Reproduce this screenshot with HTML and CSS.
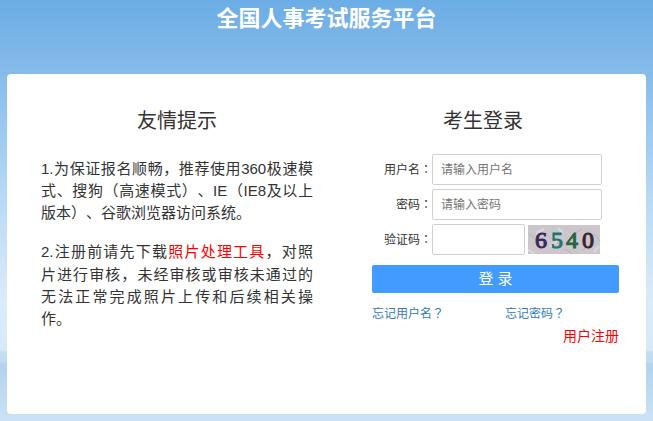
FILE: index.html
```html
<!DOCTYPE html>
<html lang="zh-CN">
<head>
    <meta charset="UTF-8">
    <meta name="viewport" content="width=device-width, initial-scale=1.0">
    <title>全国人事考试服务平台</title>
    <link rel="stylesheet" href="styles.css">
</head>
<body>
    <h1>全国人事考试服务平台</h1>

    <main class="panel">
        <section class="tips">
            <h2>友情提示</h2>
            <p>
                <span class="line">1.为保证报名顺畅<span class="mark">，</span>推荐使用360极速模</span>
                <span class="line">式、搜狗（高速模式）、IE（IE8及以上</span>
                版本）、谷歌浏览器访问系统。
            </p>
            <p>
                <span class="line">2.注册前请先下载<a href="#" class="red">照片处理工具</a><span class="mark">，</span>对照</span>
                <span class="line">片进行审核<span class="mark">，</span>未经审核或审核未通过的</span>
                <span class="line">无法正常完成照片上传和后续相关操</span>
                作。
            </p>
        </section>

        <section class="login">
            <h2>考生登录</h2>
            <form>
                <div class="form-row">
                    <label for="username">用户名<span class="mark" lang="zh-TW">：</span></label>
                    <input type="text" id="username" name="username" placeholder="请输入用户名">
                </div>
                <div class="form-row">
                    <label for="password">密码<span class="mark" lang="zh-TW">：</span></label>
                    <input type="password" id="password" name="password" placeholder="请输入密码">
                </div>
                <div class="form-row">
                    <label for="captcha">验证码<span class="mark" lang="zh-TW">：</span></label>
                    <input type="text" id="captcha" name="captcha" class="short">
                    <svg class="captcha" viewBox="0 0 72 29" width="72" height="29">
                        <rect width="72" height="29" fill="#cdc6cc"/>
                        <g fill="none" stroke-width="2" opacity="0.6">
                            <path stroke="#b3cfc3" d="M0 4l9-4M1 12l16-9M12 10l15-9M24 5l9 3M38 2l8 6M57 4l13 7M3 21l7-6M23 27l8-7M44 24l5 4M61 23l9-8"/>
                            <path stroke="#d9bfce" d="M6 6l8 5M17 3l10 7M31 10l9-7M49 2l8 6M63 3l7 7M2 17l8 8M14 22l9 6M28 17l6 9M47 16l7 9M59 17l9 9"/>
                            <path stroke="#b5a3b4" stroke-width="1" d="M0 8l6 5M11 25l8-8M23 13l8 6M36 24l8 4M46 9l8-5M55 25l9-7M66 9l6 7M18 8l4 5"/>
                            <path stroke="#e6e6e6" d="M0 25l6 3M8 8l8-4M22 22l7-6M30 3l5 5M42 21l7-5M54 13l4-4M66 27l5-6"/>
                        </g>
                        <text x="7" y="23" fill="#372858" stroke="#372858">6</text>
                        <text x="23" y="23" fill="#26736c" stroke="#26736c">5</text>
                        <text x="38" y="23" fill="#28663d" stroke="#28663d">4</text>
                        <text x="54" y="23" fill="#3a242d" stroke="#3a242d">0</text>
                    </svg>
                </div>
                <button type="submit">登 录</button>
                <div class="links">
                    <a href="#">忘记用户名<span class="mark" lang="zh-TW">？</span></a>
                    <a href="#">忘记密码<span class="mark" lang="zh-TW">？</span></a>
                </div>
                <a href="#" class="register red">用户注册</a>
            </form>
        </section>
    </main>
</body>
</html>
```

FILE: styles.css
```css
* {
    box-sizing: border-box;
}
body {
    margin: 0;
    padding: 0 7px 7px;
    min-height: 100vh;
    display: flex;
    flex-direction: column;
    font-family: "Liberation Sans", "Noto Sans CJK SC", sans-serif;
    font-size: 15px;
    line-height: 22px;
    text-spacing-trim: space-all;
    color: #333;
    /* sky on top, two soft waves near the bottom */
    background: linear-gradient(#6bade5 0, #89bdea 80px, #b8daf5 200px, #daebfa 300px, #d8eafa 350px, #c3def3 352px, #c0dcf2 362px, #b1d3ee 364px, #cbe2f6 100%);
}
h1 {
    margin: 0 0 36px;
    font-size: 22px;
    line-height: 38px;
    text-align: center;
    color: #fff;
}
h2 {
    margin: 0 0 20px;
    font-size: 20px;
    font-weight: normal;
    line-height: 26px;
    text-align: center;
}
a {
    color: #337ab7;
    text-decoration: none;
}
.red {
    color: #f00;
}
/* centred full-width punctuation */
.mark {
    font-family: "Noto Sans CJK TC", sans-serif;
}
.panel {
    flex: 1;
    display: grid;
    grid-template-columns: 1fr 1fr;
    gap: 34px;
    padding: 34px 27px 34px 34px;
    background-color: #fff;
    border-radius: 4px;
}
.tips h2 {
    margin-bottom: 23px;
}
.tips p {
    margin: 0 0 16px;
}
.line {
    display: block;
    text-align-last: justify;
    white-space: nowrap;
}
.login form {
    margin-left: 25px;
}
.form-row {
    display: flex;
    align-items: center;
    margin-bottom: 4px;
}
.form-row label {
    width: 60px;
    font-size: 12px;
    text-align: right;
}
.form-row input {
    width: 170px;
    height: 31px;
    padding: 0 8px;
    border: 1px solid #d0d0d0;
    border-radius: 2px;
    font-family: inherit;
    font-size: 12px;
    color: #555;
}
.form-row input::placeholder {
    color: #757575;
}
.form-row input.short {
    width: 93px;
}
.captcha {
    margin-left: 3px;
    font-family: "Liberation Serif", serif;
    font-size: 24px;
}
button {
    display: block;
    width: 100%;
    height: 28px;
    margin-top: 10px;
    padding: 0;
    border: none;
    border-radius: 2px;
    background-color: #429bff;
    color: #fff;
    font-family: inherit;
    font-size: 15px;
    line-height: 26px;
    cursor: pointer;
}
.links {
    display: grid;
    grid-template-columns: 133px 1fr;
    margin-top: 9px;
    font-size: 12px;
}
.register {
    display: block;
    font-size: 14px;
    text-align: right;
}
```
